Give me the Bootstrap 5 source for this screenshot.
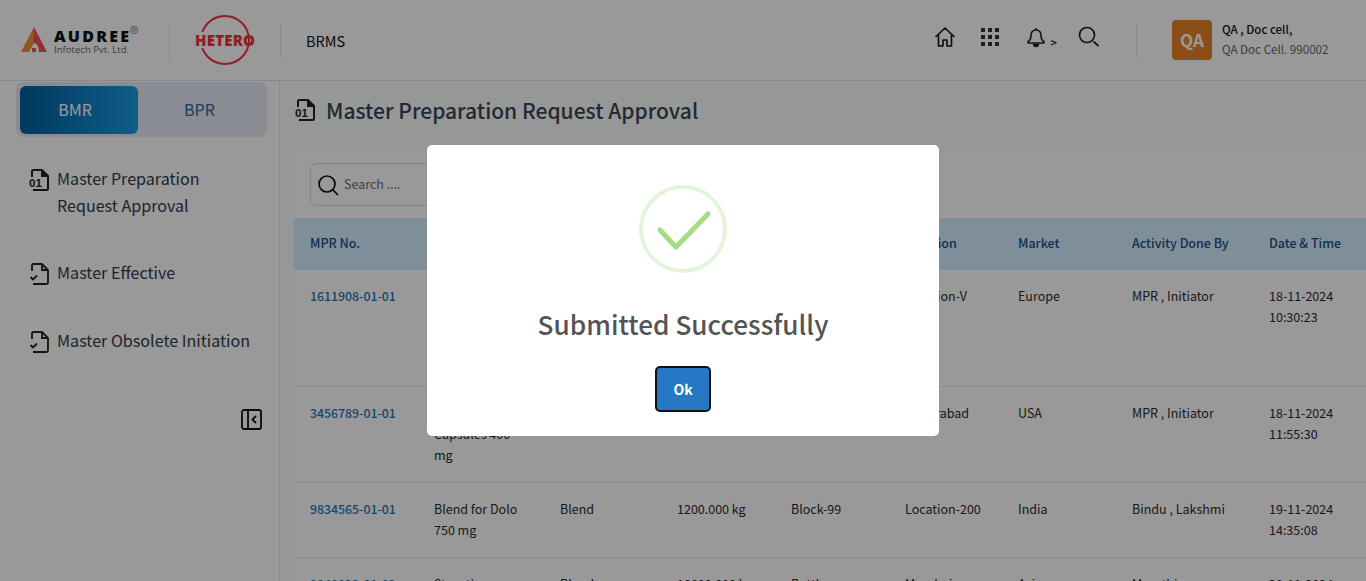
<!DOCTYPE html>
<html lang="en">
  <head>
    <meta charset="UTF-8" />
    <meta name="viewport" content="width=device-width, initial-scale=1.0" />
    <title>Master Preparation Request Approval - BRMS</title>
    <link href="https://cdn.jsdelivr.net/npm/bootstrap@5.3.0/dist/css/bootstrap.min.css" rel="stylesheet" />
    <style>
      html, body { height: 100%; overflow: hidden; }
      body {
        background-color: #fbfdfc;
        font-family: "Noto Sans CJK SC", "Noto Sans", sans-serif;
        color: #212529;
        font-size: 12.5px;
      }
      .top-bar { height: 81px; background: #ffffff; border-bottom: 1px solid #dfe3ea; padding-left: 20px; }
      .logo-audree { width: 149px; padding-top: 2px; }
      .logo-hetero { width: 110px; padding-left: 25px; }
      .v-sep { width: 1px; height: 35px; background: #e3e3e3; flex: none; }
      .brms-name { margin-left: 25px; font-size: 14.500px; color: #111; padding-top: 1px; }
      .top-icons { margin-right: 36px; margin-top: -6px; }
      .top-icons svg { display: block; }
      .icon-gap-grid { margin-left: 25px; }
      .icon-gap-bell { margin-left: 28px; }
      .icon-gap-search { margin-left: 21px; }
      .bell-more { font-size: 11px; font-weight: 700; line-height: 1; align-self: flex-end; margin-left: 6px; color: #333; }
      .user-box { width: 229px; padding-left: 35px; }
      .user-avatar { width: 40px; height: 40px; border-radius: 4px; background: #e8832a; color: #fff; font-size: 17px; font-weight: 700; flex: none; }
      .user-text { margin-left: 2px; margin-top: -2px; }
      .user-name { font-size: 11.500px; line-height: 20px; color: #111; font-weight: 500; }
      .user-cell { font-size: 11.600px; line-height: 20px; color: #666; }

      .page-body { height: 500px; }
      .side-panel { width: 280px; flex: none; background: #ffffff; border-right: 1px solid #e4e7e7; padding: 1px 12px 0 16px; }
      .tab-box { background: #e4e9f5; border-radius: 8px; padding: 4px; height: 55px; flex-wrap: nowrap; }
      .tab-box .nav-link { height: 48px; line-height: 47px; padding: 0; text-align: center; font-size: 16px; border-radius: 6px; color: #31679f; }
      .tab-box .nav-link.active { width: 118px; padding-right: 8px; background: linear-gradient(90deg, #00609f, #1a9be0); color: #fff; }
      .tab-box .tab-plain { width: 123px; }
      .side-menu { margin: 28px 0 0 13px; }
      .side-menu li { display: flex; gap: 6px; font-size: 16.100px; line-height: 27px; color: #333b4a; margin-bottom: 40px; }
      .side-menu li:last-child { margin-top: 41px; }
      .side-menu li:nth-child(2) { margin-bottom: 0; }
      .side-menu svg { flex: none; margin-top: 3px; }
      .collapse-btn { margin: 15px 5px 0 0; }

      .main-area { min-width: 0; padding: 13px 0 0 14px; }
      .page-title { font-size: 21px; line-height: 32px; font-weight: 500; color: #3a4557; margin-bottom: 24px; }
      .page-title svg { margin-left: 1px; margin-right: 1px; }
      .list-panel { background: #ffffff; border-radius: 8px 0 0 0; }
      .search-row { padding: 13px 16px 12px; }
      .search-box { width: 300px; height: 43px; border: 1px solid #dcdcdc; border-radius: 7px; padding-left: 6px; gap: 5px; }
      .search-box svg { flex: none; }
      .search-box input { border: 0; padding: 0; font-size: 12.500px; box-shadow: none; background: transparent; }
      .search-box input::placeholder { color: #6c6c6c; }
      .mpr-table { table-layout: fixed; width: 1072px; margin: 0; }
      .mpr-table th, .mpr-table td { padding: 15px 16px 17px; font-size: 12.500px; line-height: 21px; border-bottom: 1px solid #e3e5e8; color: #2b2b2b; background: transparent; box-shadow: none; }
      .mpr-table th { background: #d4eeff; color: #1c4f8c; font-weight: 500; height: 52px; border-bottom: 0; vertical-align: middle; padding-top: 12px; padding-bottom: 16px; }
      .mpr-table .mpr-no { color: #1f75b8; text-decoration: none; font-weight: 500; font-size: 12.300px; }

      .dim-layer { position: fixed; inset: 0; background: rgba(0, 0, 0, 0.4); z-index: 1050; }
      .done-dialog { width: 512px; height: 291px; background: #fff; border-radius: 5px; padding-top: 40px; }
      .done-ring { width: 88px; height: 88px; display: block; }
      .done-title { font-size: 26.200px; line-height: 36px; font-weight: 500; color: #545454; margin: 33px 0 0; }
      .done-btn { width: 56px; height: 46px; margin-top: 24px; padding: 0; background: #2778c4; color: #fff; border: 2px solid #111; border-radius: 5px; font-size: 14px; font-weight: 700; }
      .done-btn:hover { background: #2778c4; color: #fff; border-color: #111; }
    </style>
  </head>
  <body>
    <!-- Header -->
    <header class="top-bar d-flex align-items-center">
      <div class="logo-audree">
        <svg width="120" height="34" viewBox="0 0 120 34">
          <path d="M14 3 1 28h8l5-9z" fill="#f09030" />
          <path d="M14 3 27 28H19c0-5-2-9-5-9z" fill="#f0505c" />
          <rect x="12" y="24" width="4" height="4" fill="#f0505c" />
          <text x="34" y="18" font-family="Open Sans" font-weight="800" font-size="16" fill="#111" textLength="75">AUDREE</text>
          <text x="34" y="29" font-family="Open Sans" font-size="9.500" fill="#666" textLength="75">Infotech Pvt. Ltd.</text>
          <circle cx="114" cy="6" r="3.600" fill="none" stroke="#666" stroke-width=".8" />
          <text x="112.300" y="8" font-family="Liberation Sans" font-size="5" fill="#666">R</text>
        </svg>
      </div>
      <div class="v-sep"></div>
      <div class="logo-hetero">
        <svg width="62" height="52" viewBox="0 0 62 52">
          <circle cx="30" cy="26" r="24" fill="none" stroke="#f0303c" stroke-width="2" />
          <rect x="0" y="18" width="50" height="16" fill="#fff" />
          <text x="0" y="31.500" font-family="Open Sans" font-weight="800" font-size="15" fill="#f0303c" textLength="60">HETERO</text>
        </svg>
      </div>
      <div class="v-sep"></div>
      <div class="brms-name">BRMS</div>

      <div class="top-icons d-flex align-items-center ms-auto">
        <svg width="22" height="22" viewBox="0 0 22 22" fill="none" stroke="#111" stroke-width="1.6" stroke-linejoin="round">
          <path d="M1.5 11 11 2l9.500 9M4.500 9v11h4.500v-6h4v6h4.500V9" />
        </svg>
        <svg class="icon-gap-grid" width="18" height="18" viewBox="0 0 18 18" fill="#333">
          <rect x="0" y="0" width="4" height="4" /><rect x="7" y="0" width="4" height="4" /><rect x="14" y="0" width="4" height="4" />
          <rect x="0" y="7" width="4" height="4" /><rect x="7" y="7" width="4" height="4" /><rect x="14" y="7" width="4" height="4" />
          <rect x="0" y="14" width="4" height="4" /><rect x="7" y="14" width="4" height="4" /><rect x="14" y="14" width="4" height="4" />
        </svg>
        <div class="d-flex icon-gap-bell">
          <svg width="18" height="21" viewBox="0 0 18 21" fill="none" stroke="#222" stroke-width="1.600" stroke-linejoin="round">
            <path d="M9 3c-3.500 0-5 2.500-5 5.500 0 3.500-1 5-3 6.500v1h16v-1c-2-1.500-3-3-3-6.500C14 5.500 12.500 3 9 3z" />
            <path d="M9 1v2" /><path d="M6.500 17.500c.5 1.500 1.500 2 2.500 2s2-.5 2.500-2z" fill="#222" />
          </svg>
          <span class="bell-more">&gt;</span>
        </div>
        <svg class="icon-gap-search" width="22" height="22" viewBox="0 0 22 22" fill="none" stroke="#222" stroke-width="1.700">
          <circle cx="9" cy="9" r="7.500" /><path d="m15.500 15.500 5 4.500" />
        </svg>
      </div>
      <div class="v-sep"></div>
      <div class="user-box d-flex align-items-center gap-2">
        <div class="user-avatar d-flex align-items-center justify-content-center">QA</div>
        <div class="user-text">
          <div class="user-name">QA , Doc cell,</div>
          <div class="user-cell">QA Doc Cell. 990002</div>
        </div>
      </div>
    </header>

    <div class="page-body d-flex">
      <!-- Sidebar -->
      <aside class="side-panel d-flex flex-column">
        <ul class="nav tab-box">
          <li class="nav-item"><a class="nav-link active" href="#">BMR</a></li>
          <li class="nav-item"><a class="nav-link tab-plain" href="#">BPR</a></li>
        </ul>
        <ul class="side-menu list-unstyled">
          <li>
            <svg width="22" height="24" viewBox="0 0 22 24" fill="none" stroke="#222" stroke-width="2">
              <path d="M3 9V3.500C3 2.500 3.500 2 4.500 2H13l6 6v12.500c0 1-.5 1.500-1.500 1.500H4" />
              <path d="M13 2v6h6" fill="#222" />
              <text x="0" y="19" font-family="Liberation Sans" font-weight="700" font-size="11.500" fill="#222" stroke="none">01</text>
            </svg>
            <span>Master Preparation<br />Request Approval</span>
          </li>
          <li>
            <svg width="22" height="24" viewBox="0 0 22 24" fill="none" stroke="#222" stroke-width="1.800">
              <path d="M3 9V3.500C3 2.500 3.500 2 4.500 2H13l6 6v12.500c0 1-.5 1.500-1.500 1.500H4" />
              <path d="M13 2v6h6" /><path d="m1.500 15 2.500 2.500 4-4" stroke-width="1.800" />
            </svg>
            <span>Master Effective</span>
          </li>
          <li>
            <svg width="22" height="24" viewBox="0 0 22 24" fill="none" stroke="#222" stroke-width="1.800">
              <path d="M3 9V3.500C3 2.500 3.500 2 4.500 2H13l6 6v12.500c0 1-.5 1.500-1.500 1.500H4" />
              <path d="M13 2v6h6" /><path d="m1.500 15 2.500 2.500 4-4" stroke-width="1.800" />
            </svg>
            <span>Master Obsolete Initiation</span>
          </li>
        </ul>
        <svg class="collapse-btn align-self-end" width="21" height="21" viewBox="0 0 21 21" fill="none" stroke="#111" stroke-width="1.800">
          <rect x="1" y="1" width="19" height="19" rx="2" /><path d="M7 1v19" /><path d="m15 7-3.500 3.500L15 14" />
        </svg>
      </aside>

      <!-- Main content -->
      <main class="main-area flex-grow-1">
        <h1 class="page-title d-flex align-items-center gap-2">
          <svg width="22" height="24" viewBox="0 0 22 24" fill="none" stroke="#222" stroke-width="2">
            <path d="M3 9V3.500C3 2.500 3.500 2 4.500 2H13l6 6v12.500c0 1-.5 1.500-1.500 1.500H4" />
            <path d="M13 2v6h6" fill="#222" />
            <text x="0" y="19" font-family="Liberation Sans" font-weight="700" font-size="11.500" fill="#222" stroke="none">01</text>
          </svg>
          Master Preparation Request Approval
        </h1>
        <section class="list-panel">
          <div class="search-row">
            <div class="search-box d-flex align-items-center">
              <svg width="22" height="22" viewBox="0 0 22 22" fill="none" stroke="#111" stroke-width="1.700">
                <circle cx="10" cy="10" r="8" /><path d="m16 16 5 5" />
              </svg>
              <input class="form-control" type="text" placeholder="Search ...." />
            </div>
          </div>
          <table class="table mpr-table">
            <colgroup>
              <col style="width: 124px" /><col style="width: 126px" /><col style="width: 117px" />
              <col style="width: 114px" /><col style="width: 114px" /><col style="width: 113px" />
              <col style="width: 114px" /><col style="width: 137px" /><col style="width: 113px" />
            </colgroup>
            <thead>
              <tr>
                <th>MPR No.</th><th>Product Name</th><th>Type</th><th>Batch Size</th><th>Block</th>
                <th>Location</th><th>Market</th><th>Activity Done By</th><th>Date &amp; Time</th>
              </tr>
            </thead>
            <tbody id="mpr-rows"></tbody>
          </table>
        </section>
      </main>
    </div>

    <!-- Success dialog -->
    <div class="dim-layer d-flex align-items-center justify-content-center">
      <div class="done-dialog d-flex flex-column align-items-center" role="dialog">
        <svg class="done-ring" viewBox="0 0 88 88" fill="none">
          <circle cx="44" cy="44" r="42" stroke="#a5dc86" stroke-opacity=".3" stroke-width="4" />
          <path d="M21 45 37 62 69 29" stroke="#a5dc86" stroke-width="5" stroke-linecap="round" stroke-linejoin="round" />
        </svg>
        <h2 class="done-title">Submitted Successfully</h2>
        <button class="btn done-btn" type="button">Ok</button>
      </div>
    </div>

    <script src="https://cdn.jsdelivr.net/npm/bootstrap@5.3.0/dist/js/bootstrap.bundle.min.js"></script>
    <script>
      // Approval list rows
      const rows = [
        ["1611908-01-01", "Blend for Paracetamol Tablets 500 mg SR Coated", "Blend", "1000.000 kg", "Block-12", "Location-V", "Europe", "MPR , Initiator", "18-11-2024 10:30:23"],
        ["3456789-01-01", "Ibuprofen Capsules 400 mg", "Blend", "800.000 kg", "Block-45", "Hyderabad", "USA", "MPR , Initiator", "18-11-2024 11:55:30"],
        ["9834565-01-01", "Blend for Dolo 750 mg", "Blend", "1200.000 kg", "Block-99", "Location-200", "India", "Bindu , Lakshmi", "19-11-2024 14:35:08"],
        ["9840023-01-02", "Strontium Tablets", "Blend", "10000.000 kg", "Bottle", "Mumbai", "Asia", "Maruthi", "20-11-2024 09:10:45"],
      ];

      document.getElementById("mpr-rows").innerHTML = rows
        .map(
          (r) =>
            `<tr><td><a class="mpr-no" href="#">${r[0]}</a></td>` +
            r.slice(1).map((c) => `<td>${c}</td>`).join("") +
            `</tr>`
        )
        .join("");
    </script>
  </body>
</html>
